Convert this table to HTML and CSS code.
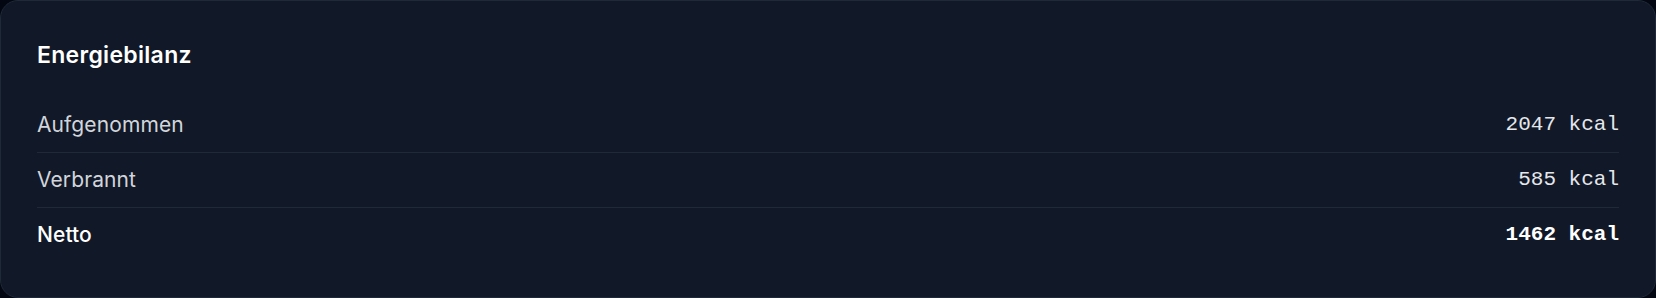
FILE: index.html
```html
<!DOCTYPE html>
<html lang="de">
<head>
  <meta charset="UTF-8">
  <meta name="viewport" content="width=device-width, initial-scale=1.0">
  <title>Energiebilanz</title>
  <link rel="stylesheet" href="styles.css">
</head>
<body>
  <!-- Karte mit der Tagesbilanz -->
  <section class="card">
    <h2 class="card-title">Energiebilanz</h2>

    <ul class="balance">
      <li class="balance-row">
        <span class="balance-label">Aufgenommen</span>
        <span class="balance-value">2047 kcal</span>
      </li>
      <li class="balance-row">
        <span class="balance-label">Verbrannt</span>
        <span class="balance-value">585 kcal</span>
      </li>
      <li class="balance-row total">
        <span class="balance-label">Netto</span>
        <span class="balance-value">1462 kcal</span>
      </li>
    </ul>
  </section>
</body>
</html>
```

FILE: styles.css
```css
/* Grundlayout */
body {
  margin: 0;
  background: #030712;
  font-family: Inter, "Noto Sans", sans-serif;
  color: #f9fafb;
}

.card {
  box-sizing: border-box;
  height: 298px;
  background: #111827;
  border: 1px solid #1f2937;
  border-radius: 18px;
  padding: 37px 36px 35px;
}

.card-title {
  margin: 0 0 26px;
  font-size: 23px;
  line-height: 34px;
  font-weight: 600;
  letter-spacing: 0.3px;
  color: #ffffff;
}

/* Liste der Werte */
.balance {
  list-style: none;
  margin: 0;
  padding: 0;
}

.balance-row {
  display: flex;
  justify-content: space-between;
  align-items: center;
  padding: 13px 0;
  height: 28px;
  line-height: 28px;
  border-bottom: 1px solid #1f2937;
}

.balance-row:last-child {
  border-bottom: none;
}

.balance-label {
  font-size: 21px;
  letter-spacing: 0.1px;
  color: #d1d5db;
}

.balance-value {
  font-family: "Liberation Mono", "DejaVu Sans Mono", monospace;
  font-size: 21px;
  color: #e5e7eb;
}

.total .balance-label {
  color: #ffffff;
  font-weight: 500;
}

.total .balance-value {
  color: #ffffff;
  font-weight: 700;
}
```
